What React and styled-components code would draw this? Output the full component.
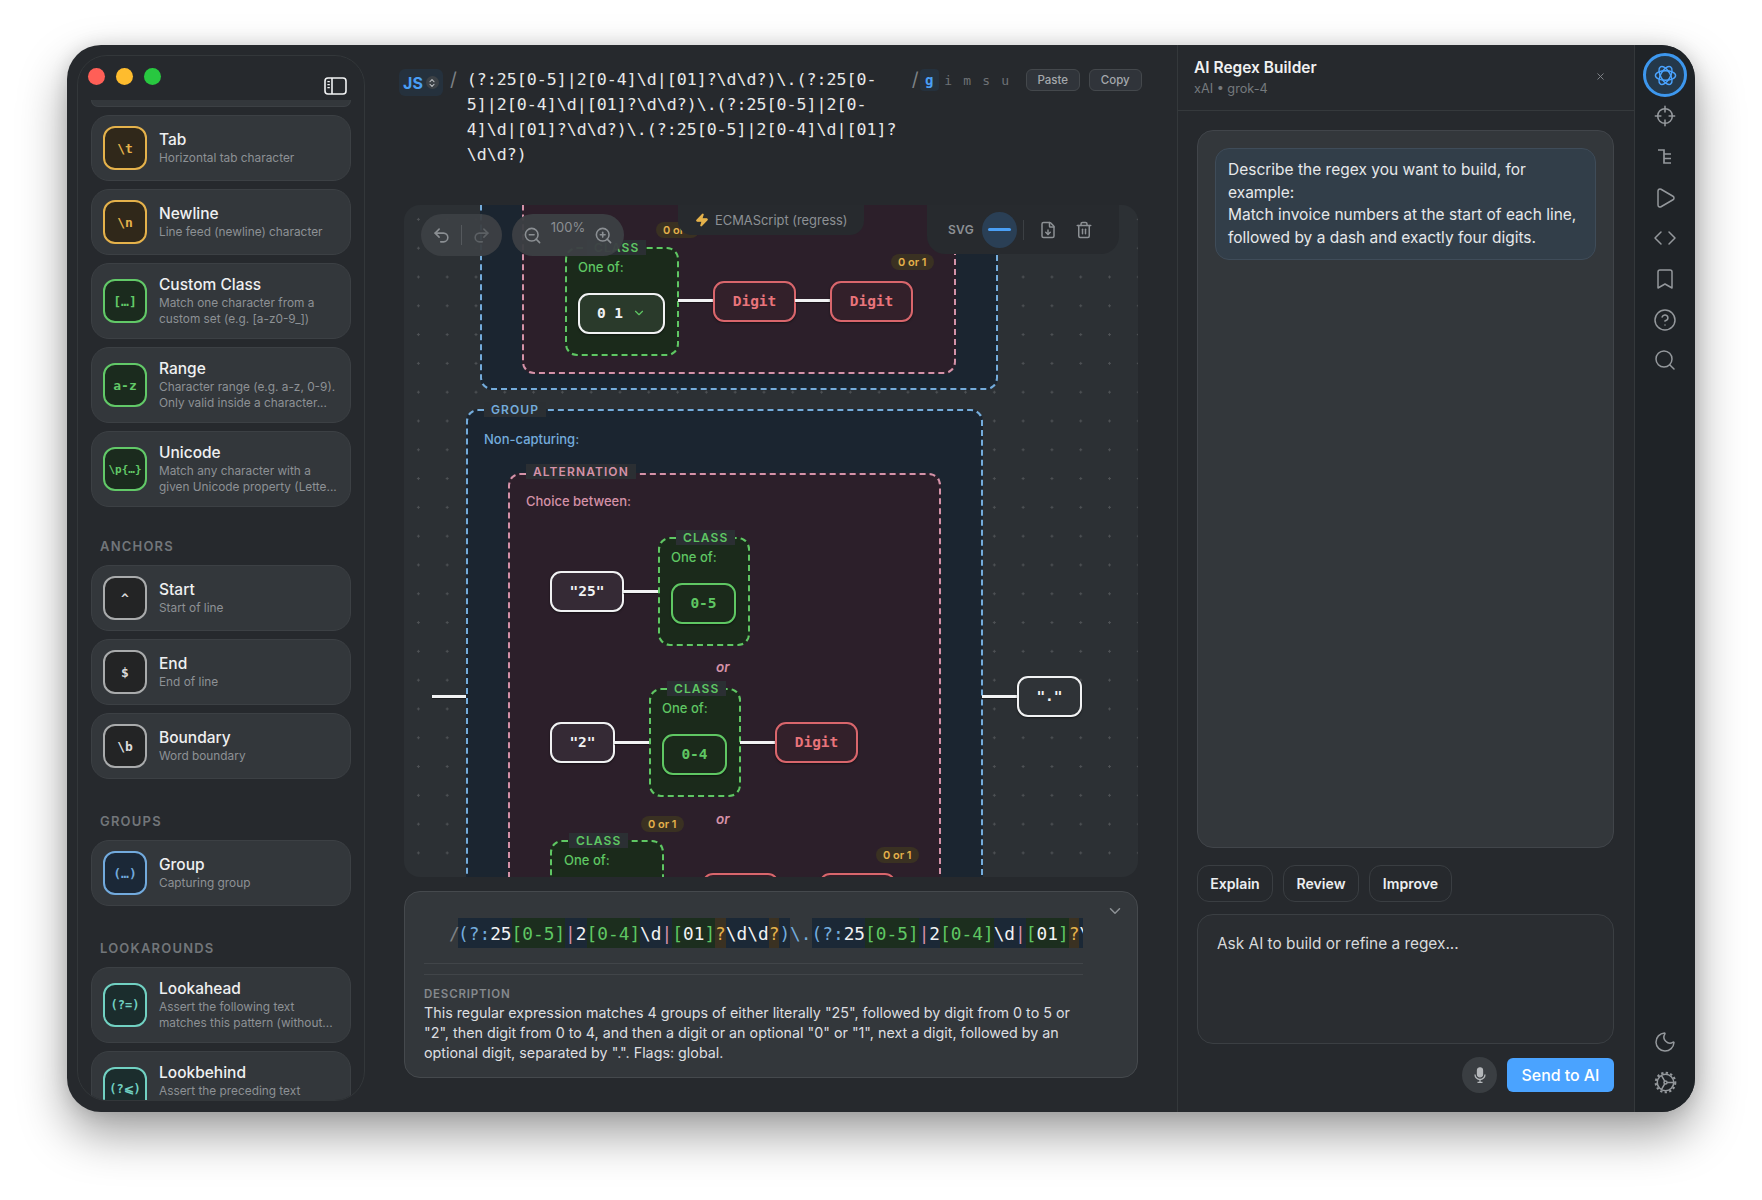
import React from "react";
import styled, { createGlobalStyle, css } from "styled-components";
import {
  Bookmark,
  ChevronDown,
  ChevronsUpDown,
  CircleHelp,
  Code,
  FileDown,
  Moon,
  Play,
  Redo2,
  Search,
  Trash2,
  Undo2,
  X,
  Zap,
  ZoomIn,
  ZoomOut,
} from "lucide-react";

const SANS = `Inter, "Liberation Sans", sans-serif`;
const MONO = `"DejaVu Sans Mono", "Liberation Mono", monospace`;

const GlobalStyle = createGlobalStyle`
  html, body {
    margin: 0;
    background: #ffffff;
    font-family: ${SANS};
  }
  * { box-sizing: border-box; }
`;

const Page = styled.div`
  width: 1762px;
  height: 1200px;
  padding-top: 45px;
  overflow: hidden;
`;

const Window = styled.div`
  width: 1628px;
  height: 1067px;
  margin: 0 auto;
  display: flex;
  background: #26292d;
  border-radius: 34px;
  box-shadow: 0 22px 48px rgba(0, 0, 0, 0.38), 0 0 18px rgba(0, 0, 0, 0.12);
  overflow: hidden;
  color: #f0f1f2;
`;

/* ---- left palette ---- */

const Sidebar = styled.aside`
  flex: 0 0 288px;
  margin: 10px 0 11px 10px;
  display: flex;
  flex-direction: column;
  background: #26292d;
  border: 1px solid #33373a;
  border-radius: 30px;
  overflow: hidden;
`;

const SidebarHead = styled.div`
  flex: 0 0 44px;
  display: flex;
  justify-content: space-between;
  padding: 12px 17px 0 10px;
`;

const Lights = styled.div`
  display: flex;
  gap: 11px;
`;

const Light = styled.span`
  width: 17px;
  height: 17px;
  border-radius: 50%;
  background: ${(p) => p.$color};
`;

const PanelGlyph = styled.span`
  display: flex;
  margin-top: 9px;
`;

const PaletteList = styled.div`
  display: flex;
  flex-direction: column;
  gap: 8px;
  padding: 0 13px;
  overflow: hidden;
  flex: 1;
`;

const cardSurface = css`
  background: #33373b;
  border: 1px solid #3c4044;
  border-radius: 18px;
`;

const ClippedCard = styled.div`
  ${cardSurface}
  flex: 0 0 7px;
  border-top: none;
  border-top-left-radius: 0;
  border-top-right-radius: 0;
`;

const Card = styled.div`
  ${cardSurface}
  flex: 0 0 ${(p) => (p.$tall ? "76px" : "66px")};
  display: flex;
  align-items: center;
  gap: 12px;
  padding: 0 11px;
`;

const tones = {
  amber: { line: "#e5b24b", fill: "#30281a", text: "#e5b24b" },
  green: { line: "#62c968", fill: "#1b2b1e", text: "#62c968" },
  gray: { line: "#a9abac", fill: "#232425", text: "#dcdcdc" },
  blue: { line: "#72aadd", fill: "#1b2837", text: "#72aadd" },
  teal: { line: "#71d1c2", fill: "#1b2d2d", text: "#71d1c2" },
};

const Glyph = styled.div`
  flex: 0 0 44px;
  height: 44px;
  display: flex;
  align-items: center;
  justify-content: center;
  border-radius: 12px;
  border: 2px solid ${(p) => tones[p.$tone].line};
  background: ${(p) => tones[p.$tone].fill};
  color: ${(p) => tones[p.$tone].text};
  font: 600 ${(p) => p.$size || 13}px ${MONO};
  white-space: nowrap;
`;

const CardText = styled.div`
  min-width: 0;
`;

const CardTitle = styled.div`
  font-size: 15.5px;
  font-weight: 500;
  line-height: 20px;
  color: #eff0f1;
`;

const CardDesc = styled.div`
  font-size: 11.85px;
  line-height: 15.5px;
  color: #8d9195;
  margin-top: 1px;
  white-space: nowrap;
  & + & {
    margin-top: 0;
  }
`;

const SectionTitle = styled.div`
  height: 16px;
  margin: ${(p) => p.$top}px 0 3px 9px;
  font-size: 13px;
  line-height: 16px;
  font-weight: 600;
  letter-spacing: 1.2px;
  color: #72767a;
`;

/* ---- centre column ---- */

const Main = styled.main`
  flex: 0 0 812px;
  min-width: 0;
  display: flex;
  flex-direction: column;
  gap: 15px;
  padding: 24px 39px 34px 39px;
`;

const ExprBar = styled.div`
  flex: 0 0 121px;
  display: flex;
  align-items: flex-start;
  margin-left: -5px;
`;

const DialectBadge = styled.div`
  flex: 0 0 44px;
  height: 27px;
  display: flex;
  align-items: center;
  justify-content: center;
  gap: 3px;
  border-radius: 6px;
  background: #25313d;
  color: #4a9ff5;
  font-size: 16px;
  font-weight: 700;
`;

const DialectArrows = styled.span`
  width: 13px;
  height: 13px;
  display: flex;
  align-items: center;
  justify-content: center;
  border-radius: 50%;
  background: #3c4146;
  color: #c4c7ca;
`;

const Slash = styled.span`
  color: #7d8185;
  font: 400 19px/22px ${SANS};
`;

const LeadSlash = styled(Slash)`
  margin: 0 10px 0 7px;
`;

const ExprText = styled.div`
  flex: 0 0 445px;
  margin-top: -2px;
  font: 400 16.6px/25px ${MONO};
  color: #e8e9ea;
  white-space: pre;
`;

const Flags = styled.div`
  display: flex;
  align-items: center;
  height: 22px;
  font: 400 13px ${MONO};
  color: #6d7175;
`;

const FlagOn = styled.span`
  width: 19px;
  height: 22px;
  margin-left: 1px;
  display: flex;
  align-items: center;
  justify-content: center;
  border-radius: 4px;
  background: #25313d;
  color: #4a9ff5;
  font-weight: 700;
  font-size: 14px;
`;

const Flag = styled.span`
  width: 19px;
  text-align: center;
`;

const SmallButton = styled.button`
  height: 22px;
  width: ${(p) => p.$w}px;
  margin-left: ${(p) => p.$gap}px;
  padding: 0;
  background: #30343a;
  border: 1px solid #44484c;
  border-radius: 6px;
  color: #a4a8ac;
  font: 500 11.5px ${SANS};
`;

/* ---- diagram canvas ---- */

const Canvas = styled.section`
  position: relative;
  flex: 1;
  min-height: 0;
  border-radius: 16px;
  background-color: #2c3034;
  background-image: radial-gradient(circle, rgba(255, 255, 255, 0.16) 1px, transparent 1.4px);
  background-size: 28.8px 28.8px;
  overflow: hidden;
`;

const frameTones = {
  group: { line: "#74acdc", fill: "#1b2530", text: "#74acdc" },
  alt: { line: "#d592a8", fill: "#2c1f2a", text: "#d592a8" },
  cls: { line: "#5fc763", fill: "#1b2a1b", text: "#5fc763" },
};

const placed = css`
  position: absolute;
  left: ${(p) => p.$x}px;
  top: ${(p) => p.$y}px;
`;

const Frame = styled.div`
  ${placed}
  width: ${(p) => p.$w}px;
  height: ${(p) => p.$h}px;
  background: ${(p) => frameTones[p.$tone].fill};
  border: 2px dashed ${(p) => frameTones[p.$tone].line};
  border-radius: 12px;
`;

const FrameTag = styled.div`
  ${placed}
  height: 15px;
  padding: 0 7px;
  background: #2b2f33;
  color: ${(p) => frameTones[p.$tone].text};
  font: 600 12px/15px ${SANS};
  letter-spacing: 1.1px;
  white-space: nowrap;
`;

const FrameCaption = styled.div`
  ${placed}
  color: ${(p) => frameTones[p.$tone].text};
  font: 500 13px/16px ${SANS};
  white-space: nowrap;
`;

const nodeTones = {
  literal: { line: "#f1f2f3", fill: "#352a35", text: "#f1f2f3" },
  sep: { line: "#f1f2f3", fill: "#2f3337", text: "#f1f2f3" },
  digit: { line: "#d9666c", fill: "#33202a", text: "#e9747b" },
  range: { line: "#5fc763", fill: "#1b2a1b", text: "#5fc763" },
  set: { line: "#f1f2f3", fill: "#2a3a2b", text: "#f1f2f3" },
};

const Node = styled.div`
  ${placed}
  width: ${(p) => p.$w}px;
  height: ${(p) => p.$h || 41}px;
  display: flex;
  align-items: center;
  justify-content: center;
  gap: 9px;
  padding-bottom: 1px;
  border: 2px solid ${(p) => nodeTones[p.$tone].line};
  border-radius: 11px;
  background: ${(p) => nodeTones[p.$tone].fill};
  color: ${(p) => nodeTones[p.$tone].text};
  font: 600 14.5px ${MONO};
  box-shadow: 0 1px 2px rgba(0, 0, 0, 0.5);
  white-space: pre;
`;

const Wire = styled.div`
  ${placed}
  width: ${(p) => p.$w}px;
  height: 3px;
  background: #f1f2f3;
  box-shadow: 0 1px 1px rgba(0, 0, 0, 0.45);
`;

const OrText = styled.div`
  ${placed}
  color: #d592a8;
  font: italic 600 13.5px/16px ${SANS};
`;

const Quant = styled.div`
  ${placed}
  height: 16px;
  padding: 0 7px;
  border-radius: 8px;
  background: #3a3122;
  color: #e5b24b;
  font: 600 11px/16px ${SANS};
  white-space: nowrap;
`;

const Pill = styled.div`
  ${placed}
  width: ${(p) => p.$w}px;
  height: 42px;
  display: flex;
  align-items: center;
  justify-content: space-between;
  padding: 0 11px;
  border-radius: 21px;
  background: rgba(60, 64, 68, 0.96);
  color: #8b8f93;
`;

const PillRule = styled.span`
  width: 1px;
  height: 20px;
  background: #55595d;
`;

const ZoomValue = styled.span`
  font-size: 13px;
  color: #8b8f93;
  margin-top: -17px;
`;

const EngineTab = styled.div`
  ${placed}
  width: 186px;
  height: 30px;
  display: flex;
  align-items: center;
  gap: 6px;
  padding-left: 17px;
  border-radius: 0 0 14px 14px;
  background: #272a2e;
  color: #8d9195;
  font-size: 12.9px;
`;

const ExportTab = styled.div`
  ${placed}
  width: 192px;
  height: 49px;
  display: flex;
  align-items: center;
  padding-left: 21px;
  border-radius: 0 0 18px 18px;
  background: #272a2e;
  color: #8d9195;
`;

const ExportLabel = styled.span`
  font-size: 12px;
  font-weight: 600;
  letter-spacing: 0.3px;
  margin-right: 8px;
`;

const WireToggle = styled.span`
  width: 35px;
  height: 36px;
  display: flex;
  align-items: center;
  justify-content: center;
  border-radius: 50%;
  background: #2a3f55;
  &::before {
    content: "";
    width: 23px;
    height: 3px;
    border-radius: 2px;
    background: #4a9ff5;
  }
`;

const ExportRule = styled.span`
  width: 1px;
  height: 20px;
  margin: 0 15px 0 6px;
  background: #3c4044;
`;

const ExportGap = styled.span`
  width: 18px;
`;

/* ---- explanation panel ---- */

const Explain = styled.section`
  position: relative;
  flex: 0 0 187px;
  margin-top: -1px;
  padding: 26px 54px 0 19px;
  background: #33373b;
  border: 1px solid #45494d;
  border-radius: 16px;
`;

const Collapse = styled.span`
  position: absolute;
  top: 10px;
  right: 13px;
  color: #8d9195;
  display: flex;
`;

const ColorLine = styled.div`
  display: flex;
  padding-left: 34px;
  padding-bottom: 15px;
  height: 46px;
  overflow: hidden;
  position: relative;
  font: 500 17.8px/31px ${MONO};
  white-space: pre;
  border-bottom: 1px solid #414549;
`;

const ColorSlash = styled.span`
  position: absolute;
  left: 25px;
  color: #7d8185;
`;

const tokenTones = {
  g: { bg: "#1b2836", fg: "#74acdc" },
  w: { bg: "#1b2836", fg: "#f1f2f3" },
  p: { bg: "#1b2836", fg: "#d592a8" },
  c: { bg: "#1c2e1e", fg: "#5fc763" },
  n: { bg: "#1c2e1e", fg: "#f1f2f3" },
  q: { bg: "#3a3122", fg: "#e5b24b" },
  e: { bg: "transparent", fg: "#74acdc" },
};

const Token = styled.span`
  background: ${(p) => tokenTones[p.$t].bg};
  color: ${(p) => tokenTones[p.$t].fg};
`;

const DoubleRule = styled.div`
  height: 11px;
  border-bottom: 1px solid #414549;
`;

const DescHead = styled.div`
  margin-top: 12px;
  font: 600 11.5px/14px ${SANS};
  letter-spacing: 0.8px;
  color: #85898d;
`;

const DescBody = styled.p`
  margin: 2px 0 0;
  font-size: 14.3px;
  line-height: 20px;
  color: #dcdee0;
`;

/* ---- AI panel ---- */

const AiPanel = styled.aside`
  flex: 0 0 457px;
  display: flex;
  flex-direction: column;
  border-left: 1px solid #34383b;
`;

const AiHead = styled.header`
  position: relative;
  flex: 0 0 66px;
  padding: 13px 16px 0;
  border-bottom: 1px solid #35393c;
`;

const AiTitle = styled.div`
  font-size: 15.5px;
  font-weight: 600;
  line-height: 20px;
  color: #f0f1f2;
`;

const AiModel = styled.div`
  margin-top: 2px;
  font-size: 12.7px;
  line-height: 18px;
  color: #75797d;
`;

const AiClose = styled.span`
  position: absolute;
  top: 26px;
  right: 28px;
  color: #85898d;
  display: flex;
`;

const AiBody = styled.div`
  flex: 1;
  min-height: 0;
  display: flex;
  flex-direction: column;
  padding: 19px 20px 19px 19px;
`;

const ChatBox = styled.div`
  flex: 1;
  padding: 17px;
  background: #33373b;
  border: 1px solid #41454a;
  border-radius: 16px;
`;

const Bubble = styled.div`
  padding: 10px 12px;
  height: 112px;
  background: #323e49;
  border: 1px solid #3f4c59;
  border-radius: 14px;
  font-size: 15.5px;
  line-height: 22.7px;
  color: #e6e8ea;
`;

const QuickRow = styled.div`
  display: flex;
  gap: 10px;
  margin-top: 17px;
`;

const QuickButton = styled.button`
  height: 37px;
  width: ${(p) => p.$w}px;
  padding: 0;
  background: transparent;
  border: 1px solid #3a3e42;
  border-radius: 12px;
  color: #eceef0;
  font: 600 14.1px ${SANS};
`;

const AskBox = styled.div`
  flex: 0 0 130px;
  margin-top: 12px;
  padding: 19px 19px;
  background: #2a2d31;
  border: 1px solid #3b3f43;
  border-radius: 16px;
  font-size: 15.4px;
  line-height: 20px;
  color: #d8dadc;
`;

const SendRow = styled.div`
  display: flex;
  justify-content: flex-end;
  align-items: center;
  gap: 10px;
  margin-top: 13px;
`;

const MicButton = styled.span`
  width: 35px;
  height: 36px;
  display: flex;
  align-items: center;
  justify-content: center;
  border-radius: 50%;
  background: #3a3e42;
`;

const SendButton = styled.button`
  width: 107px;
  height: 34px;
  padding: 0;
  background: #4aa3ff;
  border: none;
  border-radius: 6px;
  color: #ffffff;
  font: 500 15.9px ${SANS};
`;

/* ---- icon rail ---- */

const Rail = styled.nav`
  flex: 0 0 61px;
  display: flex;
  flex-direction: column;
  align-items: center;
  padding: 10px 0 9px;
  background: #1f2327;
  border-left: 1px solid #34383b;
  color: #94989c;
`;

const RailItem = styled.span`
  flex: 0 0 40.7px;
  display: flex;
  align-items: center;
  justify-content: center;
  ${(p) => p.$pushed && "margin-top: auto;"}
`;

const RailActive = styled.span`
  width: 44px;
  height: 44px;
  margin: -2px 0 -1px;
  flex: 0 0 44px;
  display: flex;
  align-items: center;
  justify-content: center;
  border: 3px solid #3d97ee;
  border-radius: 50%;
  background: #24384a;
  color: #4aa3ff;
`;

function PanelIcon() {
  return (
    <svg width="23" height="18" viewBox="0 0 23 18" fill="none" stroke="#f2f3f4" strokeWidth="1.6">
      <rect x="1" y="1" width="21" height="16" rx="3" />
      <path d="M8 1v16" />
      <path d="M3.4 4.6h2.4M3.4 7.6h2.4M3.4 10.6h2.4" strokeWidth="1.4" />
    </svg>
  );
}

function RosetteIcon() {
  return (
    <svg width="23" height="23" viewBox="0 0 24 24" fill="none" stroke="currentColor" strokeWidth="1.5">
      <ellipse cx="12" cy="12" rx="10.5" ry="5" />
      <ellipse cx="12" cy="12" rx="10.5" ry="5" transform="rotate(60 12 12)" />
      <ellipse cx="12" cy="12" rx="10.5" ry="5" transform="rotate(120 12 12)" />
    </svg>
  );
}

function TargetIcon() {
  return (
    <svg width="22" height="22" viewBox="0 0 24 24" fill="none" stroke="currentColor" strokeWidth="1.7" strokeLinecap="round">
      <circle cx="12" cy="12" r="8" />
      <path d="M12 1.5v6M12 16.5v6M1.5 12h6M16.5 12h6" />
    </svg>
  );
}

function TreeIcon() {
  return (
    <svg width="20" height="20" viewBox="0 0 20 20" fill="none" stroke="currentColor" strokeWidth="1.7">
      <path d="M3 3h6v13h7M9 7h7M9 11.5h7" />
    </svg>
  );
}

function WheelIcon() {
  return (
    <svg width="23" height="23" viewBox="0 0 24 24" fill="none" stroke="currentColor" strokeWidth="1.6">
      <circle cx="12" cy="12" r="8.6" />
      <circle cx="12" cy="12" r="10.2" strokeWidth="2.2" strokeDasharray="2.4 2.4" />
      <circle cx="12" cy="12" r="1.6" />
      <path d="M13.6 12H20.6M11.2 10.6 7.7 4.6M11.2 13.4 7.7 19.4" />
    </svg>
  );
}

function MicIcon() {
  return (
    <svg width="14" height="16" viewBox="0 0 14 16" fill="none" stroke="#b4b7ba" strokeWidth="1.3">
      <rect x="4.5" y="0.8" width="5" height="9" rx="2.5" fill="#b4b7ba" />
      <path d="M2 7.5a5 5 0 0 0 10 0M7 12.5v2.7M4.5 15.3h5" />
    </svg>
  );
}

const palette = [
  { name: "Tab", desc: "Horizontal tab character", mark: "\\t", tone: "amber" },
  { name: "Newline", desc: "Line feed (newline) character", mark: "\\n", tone: "amber" },
  { name: "Custom Class", desc: ["Match one character from a", "custom set (e.g. [a-z0-9_])"], mark: "[…]", tone: "green" },
  { name: "Range", desc: ["Character range (e.g. a-z, 0-9).", "Only valid inside a character..."], mark: "a-z", tone: "green" },
  { name: "Unicode", desc: ["Match any character with a", "given Unicode property (Lette..."], mark: "\\p{…}", tone: "green", size: 11 },
  { section: "ANCHORS", top: 23 },
  { name: "Start", desc: "Start of line", mark: "^", tone: "gray" },
  { name: "End", desc: "End of line", mark: "$", tone: "gray" },
  { name: "Boundary", desc: "Word boundary", mark: "\\b", tone: "gray" },
  { section: "GROUPS", top: 26 },
  { name: "Group", desc: "Capturing group", mark: "(…)", tone: "blue" },
  { section: "LOOKAROUNDS", top: 26 },
  { name: "Lookahead", desc: ["Assert the following text", "matches this pattern (without..."], mark: "(?=)", tone: "teal", size: 12 },
  { name: "Lookbehind", desc: ["Assert the preceding text", "matches this pattern (without..."], mark: "(?⩽)", tone: "teal", size: 12 },
];

const exprLines = [
  "(?:25[0-5]|2[0-4]\\d|[01]?\\d\\d?)\\.(?:25[0-",
  "5]|2[0-4]\\d|[01]?\\d\\d?)\\.(?:25[0-5]|2[0-",
  "4]\\d|[01]?\\d\\d?)\\.(?:25[0-5]|2[0-4]\\d|[01]?",
  "\\d\\d?)",
];

const octet = [
  ["g", "(?:"], ["w", "25"], ["c", "["], ["c", "0-5"], ["c", "]"], ["p", "|"], ["w", "2"],
  ["c", "["], ["c", "0-4"], ["c", "]"], ["w", "\\d"], ["p", "|"], ["c", "["], ["n", "01"], ["c", "]"],
  ["q", "?"], ["w", "\\d\\d"], ["q", "?"], ["g", ")"],
];
const tokens = [...octet, ["e", "\\."], ...octet];

const lucideRail = { size: 24, strokeWidth: 1.5 };

export default function App() {
  return (
    <Page>
      <GlobalStyle />
      <Window>
        <Sidebar>
          <SidebarHead>
            <Lights>
              <Light $color="#ff5f57" />
              <Light $color="#febc2e" />
              <Light $color="#28c840" />
            </Lights>
            <PanelGlyph><PanelIcon /></PanelGlyph>
          </SidebarHead>
          <PaletteList>
            <ClippedCard />
            {palette.map((item) =>
              item.section ? (
                <SectionTitle key={item.section} $top={item.top}>{item.section}</SectionTitle>
              ) : (
                <Card key={item.name} $tall={Array.isArray(item.desc)}>
                  <Glyph $tone={item.tone} $size={item.size}>{item.mark}</Glyph>
                  <CardText>
                    <CardTitle>{item.name}</CardTitle>
                    {[].concat(item.desc).map((line) => (
                      <CardDesc key={line}>{line}</CardDesc>
                    ))}
                  </CardText>
                </Card>
              )
            )}
          </PaletteList>
        </Sidebar>

        <Main>
          <ExprBar>
            <DialectBadge>
              JS
              <DialectArrows><ChevronsUpDown size={10} strokeWidth={2.5} /></DialectArrows>
            </DialectBadge>
            <LeadSlash>/</LeadSlash>
            <ExprText>{exprLines.join("\n")}</ExprText>
            <Flags>
              <Slash>/</Slash>
              <FlagOn>g</FlagOn>
              <Flag>i</Flag>
              <Flag>m</Flag>
              <Flag>s</Flag>
              <Flag>u</Flag>
              <SmallButton $w={54} $gap={11}>Paste</SmallButton>
              <SmallButton $w={53} $gap={9}>Copy</SmallButton>
            </Flags>
          </ExprBar>

          <Canvas>
            <Frame $tone="group" $x={76} $y={-60} $w={518} $h={245} />
            <Frame $tone="alt" $x={118} $y={-60} $w={434} $h={229} />
            <Frame $tone="cls" $x={161} $y={42} $w={114} $h={109} />
            <FrameTag $tone="cls" $x={183} $y={35}>CLASS</FrameTag>
            <FrameCaption $tone="cls" $x={174} $y={54}>One of:</FrameCaption>
            <Node $tone="set" $x={174} $y={88} $w={87}>
              0 1<ChevronDown size={14} color="#5fc763" />
            </Node>
            <Wire $x={274} $y={94} $w={36} />
            <Node $tone="digit" $x={309} $y={76} $w={83}>Digit</Node>
            <Wire $x={391} $y={94} $w={36} />
            <Node $tone="digit" $x={426} $y={76} $w={83}>Digit</Node>
            <Quant $x={252} $y={17}>0 or 1</Quant>
            <Quant $x={487} $y={49}>0 or 1</Quant>

            <Wire $x={28} $y={490} $w={35} />
            <Frame $tone="group" $x={62} $y={204} $w={517} $h={600} />
            <FrameTag $tone="group" $x={80} $y={197}>GROUP</FrameTag>
            <FrameCaption $tone="group" $x={80} $y={226}>Non-capturing:</FrameCaption>
            <Wire $x={578} $y={490} $w={36} />
            <Node $tone="sep" $x={613} $y={471} $w={65}>"."</Node>

            <Frame $tone="alt" $x={104} $y={268} $w={433} $h={540} />
            <FrameTag $tone="alt" $x={122} $y={259}>ALTERNATION</FrameTag>
            <FrameCaption $tone="alt" $x={122} $y={288}>Choice between:</FrameCaption>

            <Node $tone="literal" $x={146} $y={366} $w={74}>"25"</Node>
            <Wire $x={219} $y={385} $w={36} />
            <Frame $tone="cls" $x={254} $y={332} $w={92} $h={109} />
            <FrameTag $tone="cls" $x={272} $y={325}>CLASS</FrameTag>
            <FrameCaption $tone="cls" $x={267} $y={344}>One of:</FrameCaption>
            <Node $tone="range" $x={267} $y={378} $w={65}>0-5</Node>

            <OrText $x={312} $y={454}>or</OrText>

            <Node $tone="literal" $x={146} $y={517} $w={65}>"2"</Node>
            <Wire $x={210} $y={536} $w={36} />
            <Frame $tone="cls" $x={245} $y={483} $w={92} $h={109} />
            <FrameTag $tone="cls" $x={263} $y={476}>CLASS</FrameTag>
            <FrameCaption $tone="cls" $x={258} $y={495}>One of:</FrameCaption>
            <Node $tone="range" $x={258} $y={529} $w={65}>0-4</Node>
            <Wire $x={336} $y={536} $w={36} />
            <Node $tone="digit" $x={371} $y={517} $w={83}>Digit</Node>

            <OrText $x={312} $y={606}>or</OrText>

            <Frame $tone="cls" $x={146} $y={635} $w={114} $h={109} />
            <FrameTag $tone="cls" $x={165} $y={628}>CLASS</FrameTag>
            <FrameCaption $tone="cls" $x={160} $y={647}>One of:</FrameCaption>
            <Quant $x={237} $y={611}>0 or 1</Quant>
            <Quant $x={472} $y={642}>0 or 1</Quant>
            <Node $tone="digit" $x={298} $y={668} $w={77}>Digit</Node>
            <Node $tone="digit" $x={415} $y={668} $w={77}>Digit</Node>

            <Pill $x={17} $y={9} $w={81}>
              <Undo2 size={19} />
              <PillRule />
              <Redo2 size={19} color="#5c6064" />
            </Pill>
            <Pill $x={108} $y={9} $w={112}>
              <ZoomOut size={19} />
              <ZoomValue>100%</ZoomValue>
              <ZoomIn size={19} />
            </Pill>
            <EngineTab $x={274} $y={0}>
              <Zap size={14} color="#e5b24b" fill="#e5b24b" />
              ECMAScript (regress)
            </EngineTab>
            <ExportTab $x={523} $y={0}>
              <ExportLabel>SVG</ExportLabel>
              <WireToggle />
              <ExportRule />
              <FileDown size={18} />
              <ExportGap />
              <Trash2 size={18} />
            </ExportTab>
          </Canvas>

          <Explain>
            <Collapse><ChevronDown size={18} /></Collapse>
            <ColorLine>
              <ColorSlash>/</ColorSlash>
              {tokens.map(([t, s], i) => (
                <Token key={i} $t={t}>{s}</Token>
              ))}
            </ColorLine>
            <DoubleRule />
            <DescHead>DESCRIPTION</DescHead>
            <DescBody>
              This regular expression matches 4 groups of either literally "25", followed by digit from 0 to 5 or "2", then digit from 0 to 4, and then a digit or an optional "0" or "1", next a digit, followed by an optional digit, separated by ".". Flags: global.
            </DescBody>
          </Explain>
        </Main>

        <AiPanel>
          <AiHead>
            <AiTitle>AI Regex Builder</AiTitle>
            <AiModel>xAI • grok-4</AiModel>
            <AiClose><X size={11} /></AiClose>
          </AiHead>
          <AiBody>
            <ChatBox>
              <Bubble>
                Describe the regex you want to build, for example:
                <br />
                Match invoice numbers at the start of each line, followed by a dash and exactly four digits.
              </Bubble>
            </ChatBox>
            <QuickRow>
              <QuickButton $w={76}>Explain</QuickButton>
              <QuickButton $w={76}>Review</QuickButton>
              <QuickButton $w={83}>Improve</QuickButton>
            </QuickRow>
            <AskBox>Ask AI to build or refine a regex...</AskBox>
            <SendRow>
              <MicButton><MicIcon /></MicButton>
              <SendButton>Send to AI</SendButton>
            </SendRow>
          </AiBody>
        </AiPanel>

        <Rail>
          <RailActive><RosetteIcon /></RailActive>
          <RailItem><TargetIcon /></RailItem>
          <RailItem><TreeIcon /></RailItem>
          <RailItem><Play {...lucideRail} /></RailItem>
          <RailItem><Code {...lucideRail} /></RailItem>
          <RailItem><Bookmark {...lucideRail} /></RailItem>
          <RailItem><CircleHelp {...lucideRail} /></RailItem>
          <RailItem><Search {...lucideRail} /></RailItem>
          <RailItem $pushed><Moon {...lucideRail} /></RailItem>
          <RailItem><WheelIcon /></RailItem>
        </Rail>
      </Window>
    </Page>
  );
}
